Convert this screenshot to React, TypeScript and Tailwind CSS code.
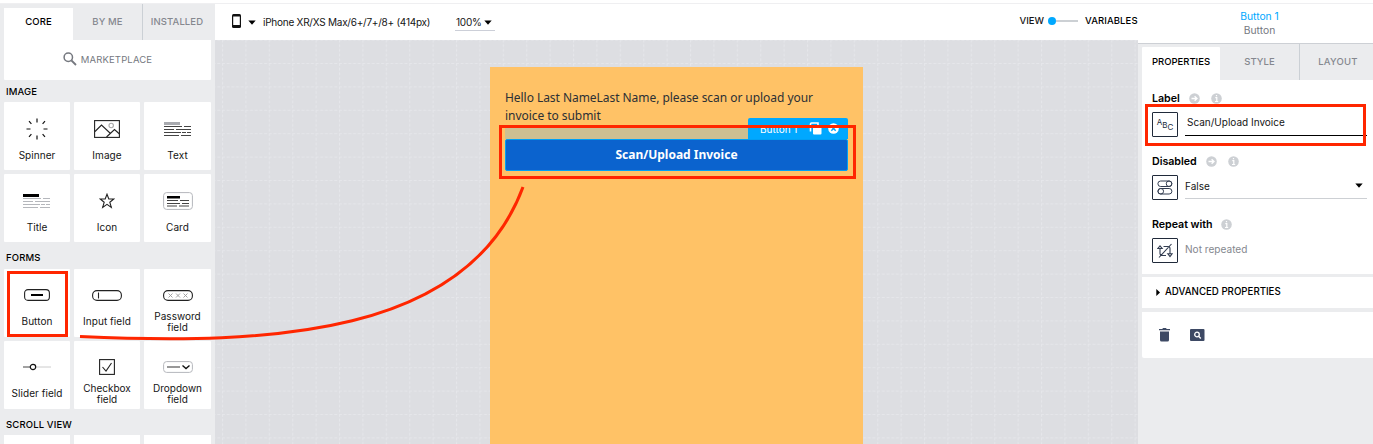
import React from "react";

type Tile = { label: string[]; icon: React.ReactNode };

const Lines = ({ dark, y = 0 }: { dark: string; y?: number }) => (
  <g stroke={dark} strokeWidth="1">
    <path d={`M0 ${y + 0.5}h18M20 ${y + 0.5}h7M0 ${y + 3.5}h10M12 ${y + 3.5}h15M0 ${y + 6.5}h17M18 ${y + 6.5}h4M23 ${y + 6.5}h4M0 ${y + 9.5}h15M17 ${y + 9.5}h10`} />
  </g>
);

const Spinner = () => (
  <svg width="22" height="22" viewBox="0 0 22 22" stroke="#111" strokeWidth="1.2" fill="none">
    <path d="M11 .5v4M11 17.5v4M.5 11h4M17.5 11h4M3 3.2l2.4 2.6M19 3.2l-2.4 2.6M3 18.8l2.4-2.6M19 18.8l-2.4-2.6" />
  </svg>
);
const Picture = () => (
  <svg width="26" height="18" viewBox="0 0 26 18" fill="none" stroke="#222" strokeWidth="1.1">
    <rect x=".6" y=".6" width="24.8" height="16.8" />
    <path d="M1 11.5 7.5 5l9 8.5M12.5 17l8-7.5 5 4.5" />
    <circle cx="17.2" cy="5.5" r="2.2" stroke="#aaa" />
  </svg>
);
const TextIcon = () => (
  <svg width="28" height="16" viewBox="0 0 28 16">
    <rect width="16" height="3" y="1" fill="#a9abb0" />
    <Lines dark="#444" y={5} />
  </svg>
);
const TitleIcon = () => (
  <svg width="28" height="16" viewBox="0 0 28 16">
    <rect width="16" height="3" y="1" fill="#000" />
    <Lines dark="#b5b7bc" y={5} />
  </svg>
);
const Star = () => (
  <svg width="16" height="16" viewBox="0 0 16 16" fill="none" stroke="#222" strokeWidth="1.1">
    <path d="M8 1.2 9.8 6h5L10.8 9.2l1.5 5.2L8 11.4l-4.3 3 1.5-5.2L1.2 6h5z" />
  </svg>
);
const CardIcon = () => (
  <svg width="30" height="18" viewBox="0 0 30 18" fill="none">
    <rect x=".6" y=".6" width="28.8" height="16.8" rx="3" stroke="#b5b7bc" />
    <rect x="4" y="4" width="13" height="2.5" fill="#000" />
    <path d="M4 8.5h11M17 8.5h9M4 11.5h13M19 11.5h7M4 14h10M16 14h10" stroke="#444" strokeWidth="1" />
  </svg>
);
const ButtonIcon = () => (
  <svg width="26" height="12" viewBox="0 0 26 12" fill="none" stroke="#222">
    <rect x=".6" y=".6" width="24.8" height="10.8" rx="3.4" strokeWidth="1.1" />
    <path d="M7 6h12" strokeWidth="2" stroke="#000" />
  </svg>
);
const InputIcon = () => (
  <svg width="30" height="11" viewBox="0 0 30 11" fill="none" stroke="#222" strokeWidth="1.1">
    <rect x=".6" y=".6" width="28.8" height="9.8" rx="4.4" />
    <path d="M6.5 2.5v6" />
  </svg>
);
const PasswordIcon = () => (
  <svg width="30" height="11" viewBox="0 0 30 11" fill="none" stroke="#222" strokeWidth="1.1">
    <rect x=".6" y=".6" width="28.8" height="9.8" rx="4.4" />
    <path d="m5.5 3.5 4 4m0-4-4 4M13 3.5l4 4m0-4-4 4M20.500 3.500l4 4m0-4-4 4" stroke="#999" strokeWidth=".9" />
  </svg>
);
const SliderIcon = () => (
  <svg width="28" height="8" viewBox="0 0 28 8" fill="none">
    <path d="M0 4h7" stroke="#444" />
    <path d="M13 4h15" stroke="#ccc" />
    <circle cx="10" cy="4" r="2.700" stroke="#111" strokeWidth="1.200" />
  </svg>
);
const CheckIcon = () => (
  <svg width="16" height="16" viewBox="0 0 16 16" fill="none" stroke="#222" strokeWidth="1.1">
    <rect x=".6" y=".6" width="14.8" height="14.8" />
    <path d="m3.500 8 3.500 4 5.500-8" />
  </svg>
);
const DropIcon = () => (
  <svg width="30" height="12" viewBox="0 0 30 12" fill="none">
    <rect x=".6" y=".6" width="28.800" height="10.800" rx="3" stroke="#b5b7bc" />
    <path d="M4 6h13" stroke="#444" strokeWidth="1.100" />
    <path d="m19.500 4.500 3.500 3 3.500-3" stroke="#111" strokeWidth="1.400" />
  </svg>
);

const imageTiles: Tile[] = [
  { label: ["Spinner"], icon: <Spinner /> },
  { label: ["Image"], icon: <Picture /> },
  { label: ["Text"], icon: <TextIcon /> },
  { label: ["Title"], icon: <TitleIcon /> },
  { label: ["Icon"], icon: <Star /> },
  { label: ["Card"], icon: <CardIcon /> },
];
const formTiles: Tile[] = [
  { label: ["Button"], icon: <ButtonIcon /> },
  { label: ["Input field"], icon: <InputIcon /> },
  { label: ["Password", "field"], icon: <PasswordIcon /> },
  { label: ["Slider field"], icon: <SliderIcon /> },
  { label: ["Checkbox", "field"], icon: <CheckIcon /> },
  { label: ["Dropdown", "field"], icon: <DropIcon /> },
];

const Grid = ({ tiles, form }: { tiles: Tile[]; form?: boolean }) => (
  <div className="grid grid-cols-[66px_66px_67px] gap-1 px-1">
    {tiles.map((t, i) => (
      <div key={i} className="flex h-[68px] flex-col items-center rounded-[1px] bg-white">
        <div className={form ? "flex h-[42px] items-center pt-[10px]" : "flex h-[43px] items-center pt-[11px]"}>{t.icon}</div>
        <div className={t.label.length > 1 ? "text-center text-[10px] leading-[10.5px]" : "pt-[4px] text-center text-[10px] leading-[12px] tracking-[0.05px]"}>
          {t.label.map((l) => (
            <div key={l}>{l}</div>
          ))}
        </div>
      </div>
    ))}
  </div>
);

const Heading = ({ children, className }: { children: string; className: string }) => (
  <div className={`flex items-center pl-[6px] text-[9.5px] leading-none font-medium tracking-[0.15px] text-black ${className}`}>{children}</div>
);

const Caret = ({ className = "" }: { className?: string }) => (
  <svg className={className} width="8" height="5" viewBox="0 0 8 5">
    <path d="M.3.500h7.400L4 4.700z" fill="#000" />
  </svg>
);
const Info = () => (
  <svg width="11" height="11" viewBox="0 0 11 11">
    <circle cx="5.500" cy="5.500" r="5.300" fill="#cdd0d4" />
    <path d="M4.300 4.700h1.500v3.600M4 8.500h3.200M5.500 2v1.300" stroke="#fff" strokeWidth="1.200" fill="none" />
  </svg>
);
const Go = () => (
  <svg width="11" height="11" viewBox="0 0 11 11">
    <circle cx="5.500" cy="5.500" r="5.300" fill="#cdd0d4" />
    <path d="M2.500 5.500h5M5.600 3.300l2.400 2.200-2.400 2.200" stroke="#fff" strokeWidth="1.300" fill="none" />
  </svg>
);

const Field = ({ label, go, children, className = "" }: { label: string; go?: boolean; children: React.ReactNode; className?: string }) => (
  <div className={className}>
    <div className="flex h-3 items-center text-[10.7px] leading-3 font-semibold text-black">
      <span className="pt-[1px] tracking-[-0.05px]">{label}</span>
      <span className="ml-[9px] flex gap-[11px]">
        {go && <Go />}
        <Info />
      </span>
    </div>
    {children}
  </div>
);

const IconBox = ({ children }: { children: React.ReactNode }) => (
  <div className="flex h-[25px] w-[26px] shrink-0 items-center justify-center rounded-[1px] border border-[#202a3a]">{children}</div>
);

const CanvasDots = () => (
  <svg className="absolute inset-0" width="923" height="404">
    <defs>
      <pattern id="dots" x="7" y="23" width="23.4" height="23.4" patternUnits="userSpaceOnUse">
        <path d="M.5 0v23.400M0 .5h23.400" stroke="#e5e6ea" strokeWidth="1" strokeDasharray="2.900 1.780" fill="none" />
      </pattern>
    </defs>
    <rect width="923" height="404" fill="url(#dots)" />
  </svg>
);

export default function App() {
  return (
    <div className="relative flex h-[444px] w-[1373px] flex-col overflow-hidden bg-white font-['Inter',sans-serif] text-[#151515]">
      <div className="h-1 shrink-0 border-b border-[#efeff1]" />
      <div className="flex min-h-0 flex-1">
        <aside className="w-[215px] shrink-0 overflow-hidden bg-[#ebecee]">
          <div className="flex h-9 text-[9.5px] leading-none font-medium tracking-[0.1px] text-[#85888f]">
            <div className="mt-1 ml-1 flex w-[69px] items-center justify-center bg-white pb-1 text-black">CORE</div>
            <div className="flex w-[70px] items-center justify-center border-r border-[#cbd0d5]">BY ME</div>
            <div className="flex w-[68px] items-center justify-center">INSTALLED</div>
          </div>
          <div className="mx-1 flex h-[39.500px] items-center justify-center gap-[4px] rounded-b-[1px] bg-white pb-[1px] text-[9.5px] leading-none tracking-[0.150px] text-[#75787f]">
            <svg width="14" height="14" viewBox="0 0 14 14" fill="none" stroke="#75787f">
              <circle cx="5.300" cy="5.300" r="4.200" strokeWidth="1.500" />
              <path d="m8.500 8.500 4.500 4.500" strokeWidth="1.800" />
            </svg>
            MARKETPLACE
          </div>
          <Heading className="h-[22.500px] pt-[2px]">IMAGE</Heading>
          <Grid tiles={imageTiles} />
          <Heading className="h-[27px] pt-[4px]">FORMS</Heading>
          <Grid tiles={formTiles} form />
          <Heading className="h-[26px] pt-[5px]">SCROLL VIEW</Heading>
          <div className="grid grid-cols-[66px_66px_67px] gap-1 px-1">
            <div className="h-4 bg-white" />
            <div className="h-4 bg-white" />
            <div className="h-4 bg-white" />
          </div>
        </aside>

        <main className="flex w-[923px] shrink-0 flex-col">
          <header className="flex h-9 shrink-0 items-center bg-white text-[10px] leading-none">
            <svg className="-mt-[3px] ml-[17px]" width="9" height="14" viewBox="0 0 9 14">
              <rect width="9" height="14" rx="1.500" fill="#111" />
              <rect x="1.200" y="2.500" width="6.600" height="8.500" fill="#fff" />
            </svg>
            <Caret className="ml-[7px]" />
            <span className="ml-[7px] w-[167px] whitespace-nowrap tracking-[-0.24px]">iPhone XR/XS Max/6+/7+/8+ (414px)</span>
            <span className="ml-[25px] flex h-[18px] w-10 items-center gap-[3px] border-b border-[#cccfd8] pt-[1px] pl-px">
              <span className="w-[25px] whitespace-nowrap tracking-[-0.2px]">100%</span>
              <Caret />
            </span>
            <span className="ml-auto flex items-center pb-[2px] text-[9.5px] font-medium">
              <span>VIEW</span>
              <span className="ml-[4px] h-2 w-2 rounded-full bg-[#00a8ff]" />
              <span className="h-[1.500px] w-[22px] bg-[#ccd0d4]" />
              <span className="ml-[7px] w-[53px] whitespace-nowrap text-black tracking-[0.1px]">VARIABLES</span>
            </span>
          </header>
          <div className="relative flex-1 bg-[#dddee2] pt-[27px]">
            <CanvasDots />
            <div className="relative ml-[275px] h-[377px] w-[373px] bg-[#ffc266] px-[15px] pt-[22px] font-['Noto_Sans',sans-serif]">
              <p className="h-9 text-[12px] leading-[18px] tracking-[-0.05px] whitespace-nowrap text-[#2c3035]">
                Hello Last NameLast Name, please scan or upload your
                <br />
                invoice to submit
              </p>
              <div className="relative mt-[3px] h-[11px] bg-[#cdbf92]">
                <div className="absolute -top-[10px] right-0 flex h-[21px] w-[100px] items-center rounded-t-[2px] bg-[#00a8ff] pl-3 font-['Inter',sans-serif] text-[10px] leading-none text-white">
                  <span className="w-[38px] whitespace-nowrap">Button 1</span>
                  <svg className="ml-[11px]" width="13" height="13" viewBox="0 0 13 13">
                    <path d="M1.500 9.500V2q0-1 1-1h6.500v2" stroke="#fff" strokeWidth="1.600" fill="none" />
                    <rect x="4" y="3.500" width="8.500" height="9" rx="1" fill="#fff" />
                  </svg>
                  <svg className="ml-[6px]" width="11" height="11" viewBox="0 0 11 11">
                    <circle cx="5.500" cy="5.500" r="5.300" fill="#fff" />
                    <path d="m3.300 3.300 4.400 4.400m0-4.400L3.300 7.700" stroke="#00a8ff" strokeWidth="1.500" />
                  </svg>
                </div>
              </div>
              <div className="flex h-8 items-center justify-center rounded-[2px] border border-[#00a0f5] bg-[#0b63ce] text-[12px] leading-none font-bold text-white">Scan/Upload Invoice</div>
            </div>
          </div>
        </main>

        <aside className="flex w-[235px] shrink-0 flex-col bg-[#ebecee]">
          <div className="flex h-10 shrink-0 flex-col items-center border-b border-[#cdd0d5] bg-white pt-[5px] pl-[8px] text-[10.300px] leading-[14px]">
            <span className="text-[#00a8ff]">Button 1</span>
            <span className="text-[#75787f]">Button</span>
          </div>
          <div className="ml-1 flex h-9 shrink-0 text-[9.5px] leading-none font-medium text-[#85888f]">
            <div className="mt-[3px] flex w-[78px] items-center justify-center rounded-t-[1px] bg-white pb-[3px] text-black">PROPERTIES</div>
            <div className="flex w-[80px] items-center justify-center border-r border-[#cbd0d5] tracking-[0.100px]">STYLE</div>
            <div className="flex flex-1 items-center justify-center pl-[3px] tracking-[0.200px]">LAYOUT</div>
          </div>
          <div className="ml-1 h-[194px] shrink-0 bg-white pt-[12px] pl-[10px]">
            <Field label="Label" go>
              <div className="mt-2 flex">
                <IconBox>
                  <span className="flex items-center text-[8px] leading-none text-[#202a3a]">
                    <span className="-mt-[5px]">A</span>
                    <span className="mt-0">B</span>
                    <span className="mt-[5px]">C</span>
                  </span>
                </IconBox>
                <div className="ml-[7px] flex h-6 w-[182px] items-center border-b border-black pb-[3px] pl-[2px] text-[10px] leading-none">Scan/Upload Invoice</div>
              </div>
            </Field>
            <Field label="Disabled" go className="mt-[18px]">
              <div className="mt-2 flex">
                <IconBox>
                  <svg width="16" height="15" viewBox="0 0 16 15" fill="none" stroke="#323c50">
                    <rect x=".900" y="1" width="14" height="5.500" rx="2.750" />
                    <rect x=".900" y="8.500" width="14" height="5.500" rx="2.750" />
                    <circle cx="12" cy="3.750" r="2.750" />
                    <circle cx="3.800" cy="11.250" r="2.750" />
                  </svg>
                </IconBox>
                <div className="ml-[7px] flex h-6 w-[182px] items-center justify-between border-b border-[#cdd0d4] pr-[4px] pb-[2px] text-[10px] leading-none">
                  False
                  <Caret />
                </div>
              </div>
            </Field>
            <Field label="Repeat with" className="mt-[18px]">
              <div className="mt-2 flex">
                <IconBox>
                  <svg width="16" height="16" viewBox="0 0 16 16" fill="none" stroke="#323c50" strokeWidth="1.1">
                    <path d="M3 10.500V5.500M.8 5.500 3 2.800l2.200 2.700zM3 10.500q0 2 2 2h4M6.500 3.500H11q2 0 2 2v5M10.800 10.700h4.400L13 13.500zM14.500 1 2 14.500" />
                  </svg>
                </IconBox>
                <div className="ml-[7px] flex h-6 items-center pb-[1px] text-[10.1px] leading-none text-[#85888f]">Not repeated</div>
              </div>
            </Field>
          </div>
          <div className="mt-[3px] ml-1 flex h-[31px] shrink-0 items-center bg-white pl-[14px] text-[9.700px] leading-none font-medium text-black">
            <svg width="4" height="7" viewBox="0 0 4 7">
              <path d="M.300 0 4 3.500.300 7z" />
            </svg>
            <span className="ml-[5px] pb-[1px]">ADVANCED PROPERTIES</span>
          </div>
          <div className="mt-1 ml-1 flex h-[46px] shrink-0 items-center rounded-bl-[2px] bg-white pl-[17px]">
            <svg width="11" height="14" viewBox="0 0 11 14" fill="#3d4964">
              <path d="M0 1h3.300L4 0h3l.700 1H11v1.300H0zM1 3.500h9V12q0 1.500-1.500 1.500h-6Q1 13.500 1 12z" />
            </svg>
            <svg className="ml-[20px]" width="15" height="12" viewBox="0 0 15 12" fill="none">
              <rect width="14.500" height="12" rx="1" fill="#3d4964" />
              <circle cx="7" cy="5.500" r="2.300" stroke="#fff" strokeWidth="1.300" />
              <path d="m8.600 7.200 2.200 2.200" stroke="#fff" strokeWidth="1.400" />
            </svg>
          </div>
        </aside>
      </div>

      <div className="absolute top-[271px] left-[7px] h-[66px] w-[61px] border-[3px] border-[#ff2600]" />
      <div className="absolute top-[125px] left-[499px] h-[54px] w-[357px] border-[3px] border-[#ff2600]" />
      <div className="absolute top-[104px] left-[1145px] h-[42px] w-[221px] border-[3px] border-[#ff2600]" />
      <svg className="absolute inset-0" width="1373" height="444" viewBox="0 0 1373 444" fill="none">
        <path d="M80 336.500C270 345 468 336 523 187" stroke="#ff2600" strokeWidth="3" />
      </svg>
    </div>
  );
}
